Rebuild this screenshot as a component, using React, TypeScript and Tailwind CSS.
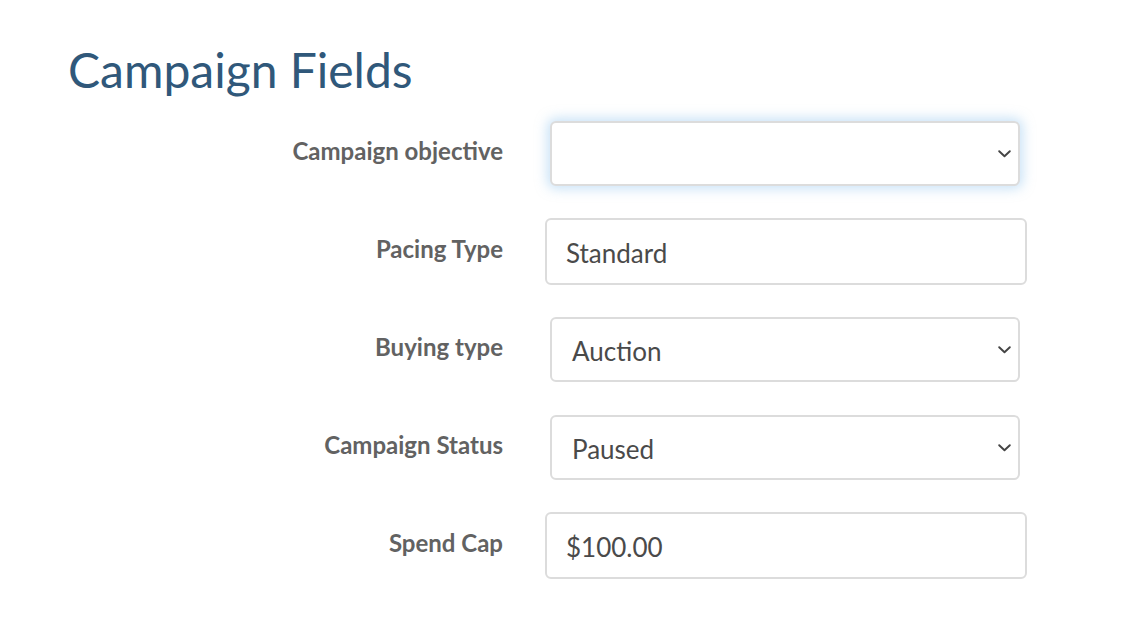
import { ReactNode } from 'react';

const font = { fontFamily: 'Lato, "Open Sans", sans-serif' };

function Chevron() {
  return (
    <svg width="13" height="8" viewBox="0 0 13 8" fill="none" className="shrink-0">
      <path d="M1.2 1.2 L6.5 6.3 L11.8 1.2" stroke="#444" strokeWidth="1.9" strokeLinecap="round" strokeLinejoin="round" />
    </svg>
  );
}

function SelectBox({ value, focused }: { value?: string; focused?: boolean }) {
  return (
    <div
      className={`ml-[47px] flex h-[65px] w-[470px] items-center justify-between rounded-[6px] border-2 border-[#dcdcdc] bg-white pl-[20px] pr-[7px] text-[26px] text-[#4a4a4a] ${
        focused ? 'shadow-[0_0_12px_3px_rgba(150,200,240,0.5)]' : ''
      }`}
    >
      <span className="pt-[3px]">{value}</span>
      <Chevron />
    </div>
  );
}

function TextBox({ value }: { value: string }) {
  return (
    <div className="ml-[42px] flex h-[67px] w-[482px] items-center rounded-[6px] border-2 border-[#dcdcdc] bg-white pl-[19px] pt-[3px] text-[26px] text-[#4a4a4a]">
      {value}
    </div>
  );
}

function Row({ label, children }: { label: string; children: ReactNode }) {
  return (
    <div className="flex h-[98px] items-center">
      <div className="w-[503px] pb-[6px] text-right text-[24px] font-bold leading-7 text-[#626262]">{label}</div>
      {children}
    </div>
  );
}

export default function App() {
  return (
    <div className="h-[624px] w-[1128px] overflow-hidden bg-white pt-[41px]" style={font}>
      <h1 className="pl-[68px] text-[48px] leading-[1.2] font-normal text-[#30587a]">Campaign Fields</h1>
      <div className="mt-[6px]">
        <Row label="Campaign objective">
          <SelectBox focused />
        </Row>
        <Row label="Pacing Type">
          <TextBox value="Standard" />
        </Row>
        <Row label="Buying type">
          <SelectBox value="Auction" />
        </Row>
        <Row label="Campaign Status">
          <SelectBox value="Paused" />
        </Row>
        <Row label="Spend Cap">
          <TextBox value="$100.00" />
        </Row>
      </div>
    </div>
  );
}
